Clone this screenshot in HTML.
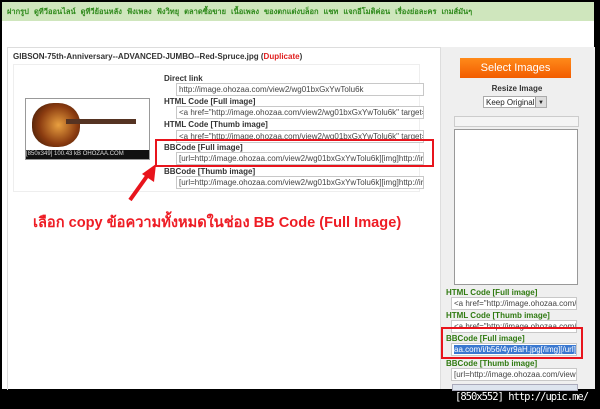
<!DOCTYPE html>
<html><head><meta charset="utf-8"><style>
body{margin:0;width:600px;height:409px;background:#000;position:relative;overflow:hidden;font-family:"Liberation Sans","Noto Sans CJK SC",sans-serif;}
.a{position:absolute;}
.pg{left:2px;top:2px;width:592px;height:387px;background:#fff;}
.nav{left:2px;top:2px;width:592px;height:19px;background:#cfe6bd;font-size:7.5px;color:#2f8a1c;font-weight:bold;line-height:19px;white-space:nowrap;}
.nav span{margin-left:5px;}
.lbl{font-size:8px;font-weight:bold;color:#333;}
.inp{background:#fff;border:1px solid #c8c8c8;font-size:8px;color:#444;height:11px;line-height:11px;overflow:hidden;white-space:nowrap;padding-left:2px;}
.g{color:#2f7a10;}
</style></head><body>
<div class="a pg"></div>
<div class="a nav"><span>ฝากรูป</span><span>ดูทีวีออนไลน์</span><span>ดูทีวีย้อนหลัง</span><span>ฟังเพลง</span><span>ฟังวิทยุ</span><span>ตลาดซื้อขาย</span><span>เนื้อเพลง</span><span>ของตกแต่งบล็อก</span><span>แชท</span><span>แจกอีโมติค่อน</span><span>เรื่องย่อละคร</span><span>เกมส์มันๆ</span></div>
<div class="a" style="left:7px;top:47px;width:587px;height:342px;border:1px solid #ddd;border-right:none;border-bottom:none;"></div>
<div class="a" style="left:440px;top:47px;width:154px;height:342px;background:#efefef;border-left:1px solid #ddd"></div>
<div class="a" style="left:13px;top:52px;font-size:8px;font-weight:bold;color:#333;white-space:nowrap">GIBSON-75th-Anniversary--ADVANCED-JUMBO--Red-Spruce.jpg (<span style="color:#e02020">Duplicate</span>)</div>
<div class="a" style="left:13px;top:64px;width:405px;height:126px;border:1px solid #eee"></div>
<div class="a" style="left:25px;top:98px;width:123px;height:60px;background:#fff;border:1px solid #999;overflow:hidden">
<div class="a" style="left:6px;top:4px;width:48px;height:44px;border-radius:45%;background:radial-gradient(circle at 55% 50%,#e9a040,#8a3b10 55%,#2a1205);"></div>
<div class="a" style="left:40px;top:20px;width:70px;height:5px;background:#553322"></div>
<div class="a" style="left:0;top:51px;width:123px;height:9px;background:#111;color:#ddd;font-size:6px;line-height:9px;white-space:nowrap">[850x349] 100.43 kB OHOZAA.COM</div></div>
<div class="a lbl" style="left:164px;top:74px">Direct link</div>
<div class="a inp" style="left:176px;top:83px;width:244px">http://image.ohozaa.com/view2/wg01bxGxYwTolu6k</div>
<div class="a lbl" style="left:164px;top:97px">HTML Code [Full image]</div>
<div class="a inp" style="left:176px;top:106px;width:244px">&lt;a href="http://image.ohozaa.com/view2/wg01bxGxYwTolu6k" target=</div>
<div class="a lbl" style="left:164px;top:120px">HTML Code [Thumb image]</div>
<div class="a inp" style="left:176px;top:130px;width:244px">&lt;a href="http://image.ohozaa.com/view2/wg01bxGxYwTolu6k" target=</div>
<div class="a lbl" style="left:164px;top:143px">BBCode [Full image]</div>
<div class="a inp" style="left:176px;top:152px;width:244px">[url=http://image.ohozaa.com/view2/wg01bxGxYwTolu6k][img]http://ir</div>
<div class="a lbl" style="left:164px;top:167px">BBCode [Thumb image]</div>
<div class="a inp" style="left:176px;top:176px;width:244px">[url=http://image.ohozaa.com/view2/wg01bxGxYwTolu6k][img]http://ir</div>
<div class="a" style="left:155px;top:139px;width:275px;height:24px;border:2px solid #e8141c"></div>
<svg class="a" style="left:120px;top:160px" width="45" height="45"><line x1="10" y1="40" x2="30" y2="12" stroke="#e8141c" stroke-width="4"/><polygon points="36,4 22,14 34,22" fill="#e8141c"/></svg>
<div class="a" style="left:33px;top:211px;font-size:14.6px;font-weight:bold;color:#ee1c24;white-space:nowrap">เลือก copy ข้อความทั้งหมดในช่อง BB Code (Full Image)</div>
<div class="a" style="left:460px;top:58px;width:111px;height:20px;background:linear-gradient(#ff8a1a,#f25c00);color:#fff;font-size:11px;text-align:center;line-height:20px">Select Images</div>
<div class="a" style="left:440px;top:84px;width:154px;text-align:center;font-size:8px;font-weight:bold;color:#333">Resize Image</div>
<div class="a" style="left:483px;top:96px;width:64px;height:12px;background:#fff;border:1px solid #aaa;font-size:8px;line-height:12px;color:#222;padding-left:2px;box-sizing:border-box">Keep Original<span style="position:absolute;right:0;top:0;width:10px;height:10px;background:#ddd;border-left:1px solid #999;font-size:6px;text-align:center">▼</span></div>
<div class="a" style="left:454px;top:116px;width:123px;height:9px;background:#f4f4f4;border:1px solid #ccc"></div>
<div class="a" style="left:454px;top:129px;width:122px;height:154px;background:#fff;border:1px solid #999"></div>
<div class="a lbl g" style="left:446px;top:288px">HTML Code [Full image]</div>
<div class="a inp" style="left:451px;top:297px;width:122px">&lt;a href="http://image.ohozaa.com/</div>
<div class="a lbl g" style="left:446px;top:311px">HTML Code [Thumb image]</div>
<div class="a inp" style="left:451px;top:320px;width:122px">&lt;a href="http://image.ohozaa.com/</div>
<div class="a lbl g" style="left:446px;top:334px">BBCode [Full image]</div>
<div class="a inp" style="left:451px;top:343px;width:122px"><span style="background:#3a78d0;color:#fff">aa.com/i/b56/4yr9aH.jpg[/img][/url]</span></div>
<div class="a lbl g" style="left:446px;top:359px">BBCode [Thumb image]</div>
<div class="a inp" style="left:451px;top:368px;width:122px">[url=http://image.ohozaa.com/view</div>
<div class="a" style="left:441px;top:327px;width:138px;height:28px;border:2px solid #e8141c"></div>
<div class="a" style="left:452px;top:384px;width:124px;height:5px;background:#dde4ee;border:1px solid #aab"></div>
<div class="a" style="left:455px;top:391px;color:#fff;font-size:10.5px;font-family:'DejaVu Sans Mono',monospace;white-space:nowrap;letter-spacing:-1px">[850x552] http://upic.me/</div>
</body></html>
